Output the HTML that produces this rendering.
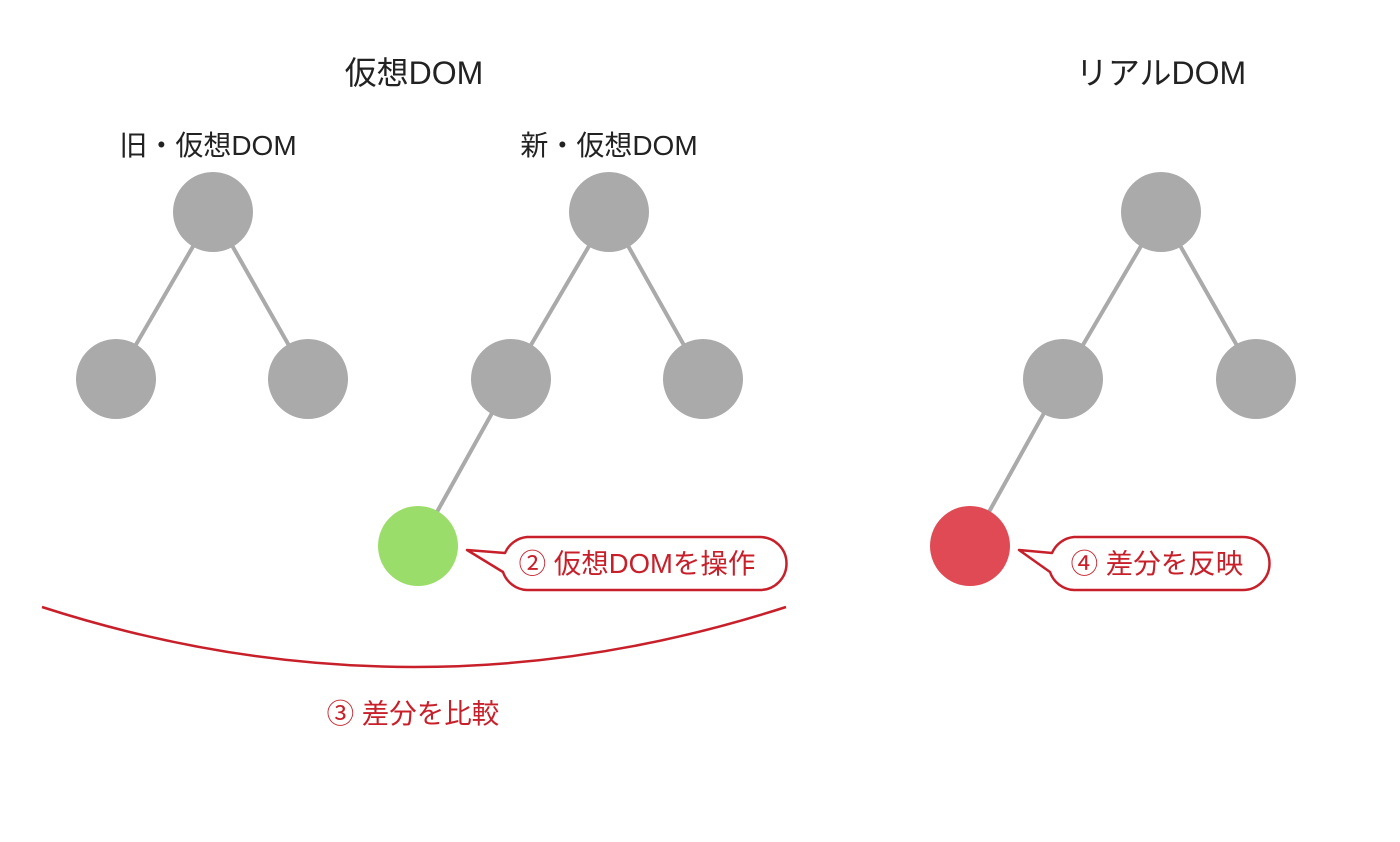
<!DOCTYPE html>
<html><head><meta charset="utf-8"><style>
html,body{margin:0;padding:0;background:#fff;}
svg{display:block;}
text{font-family:"Liberation Sans","Noto Sans CJK JP",sans-serif;}
</style></head><body>
<svg width="1400" height="842" viewBox="0 0 1400 842" xmlns="http://www.w3.org/2000/svg">
<g stroke="#aaa" stroke-width="4">
<line x1="213" y1="212" x2="116" y2="379"/><line x1="213" y1="212" x2="308" y2="379"/>
<line x1="609" y1="212" x2="511" y2="379"/><line x1="609" y1="212" x2="703" y2="379"/>
<line x1="511" y1="379" x2="418" y2="546"/>
<line x1="1161" y1="212" x2="1063" y2="379"/><line x1="1161" y1="212" x2="1256" y2="379"/>
<line x1="1063" y1="379" x2="970" y2="546"/>
</g>
<g fill="#aaa">
<circle cx="213" cy="212" r="40"/><circle cx="116" cy="379" r="40"/><circle cx="308" cy="379" r="40"/>
<circle cx="609" cy="212" r="40"/><circle cx="511" cy="379" r="40"/><circle cx="703" cy="379" r="40"/>
<circle cx="1161" cy="212" r="40"/><circle cx="1063" cy="379" r="40"/><circle cx="1256" cy="379" r="40"/>
</g>
<circle cx="418" cy="546" r="40" fill="#9bdd6a"/>
<circle cx="970" cy="546" r="40" fill="#e04a55"/>
<g fill="#fff" stroke="#c8202a" stroke-width="2.5" stroke-linejoin="round">
<path d="M527 537 H760 A26.5 26.5 0 0 1 760 590 H527 A26.5 26.5 0 0 1 503 572 L467 550 L505 553 A26.5 26.5 0 0 1 527 537 Z"/>
<path d="M1074 537 H1243 A26.5 26.5 0 0 1 1243 590 H1074 A26.5 26.5 0 0 1 1050 572 L1019 550 L1052 553 A26.5 26.5 0 0 1 1074 537 Z"/>
</g>
<path d="M42 607 Q414 727 786 607" fill="none" stroke="#c8202a" stroke-width="2.5"/>
<g fill="#222" text-anchor="middle">
<text x="414" y="84" font-size="32">仮想DOM</text>
<text x="1161" y="84" font-size="32">リアルDOM</text>
<text x="208" y="155" font-size="28">旧・仮想DOM</text>
<text x="609" y="155" font-size="28">新・仮想DOM</text>
</g>
<g fill="#c8202a" text-anchor="middle" font-size="27.5">
<text x="637" y="573">② 仮想DOMを操作</text>
<text x="1157" y="573">④ 差分を反映</text>
<text x="413" y="723">③ 差分を比較</text>
</g>
</svg>
</body></html>
